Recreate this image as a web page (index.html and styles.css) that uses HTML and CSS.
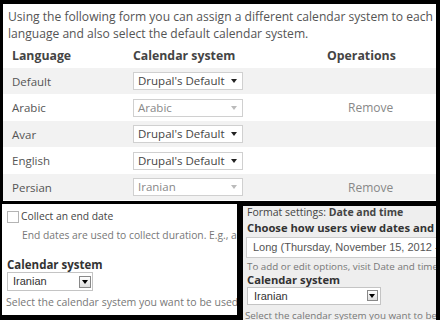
FILE: index.html
```html
<!DOCTYPE html>
<html lang="en">
<head>
    <meta charset="UTF-8">
    <title>Calendar systems</title>
    <link rel="stylesheet" href="styles.css">
</head>
<body>
<div class="shot top-shot">
    <p class="intro">Using the following form you can assign a different calendar system to each language and also select the default calendar system.</p>
    <table class="lang-table">
        <thead>
            <tr><th class="col-lang">Language</th><th class="col-cal">Calendar system</th><th class="col-ops">Operations</th></tr>
        </thead>
        <tbody>
            <tr class="odd">
                <td>Default</td>
                <td><div class="sel">Drupal's Default<span class="arrow"></span></div></td>
                <td></td>
            </tr>
            <tr class="even">
                <td>Arabic</td>
                <td><div class="sel disabled">Arabic<span class="arrow"></span></div></td>
                <td class="op">Remove</td>
            </tr>
            <tr class="odd">
                <td>Avar</td>
                <td><div class="sel">Drupal's Default<span class="arrow"></span></div></td>
                <td></td>
            </tr>
            <tr class="even">
                <td>English</td>
                <td><div class="sel">Drupal's Default<span class="arrow"></span></div></td>
                <td></td>
            </tr>
            <tr class="odd">
                <td>Persian</td>
                <td><div class="sel disabled">Iranian<span class="arrow"></span></div></td>
                <td class="op">Remove</td>
            </tr>
        </tbody>
    </table>
</div>
<div class="bottom">
    <div class="shot field-shot">
        <label class="check"><span class="box"></span>Collect an end date</label>
        <div class="desc">End dates are used to collect duration. E.g., allow an event to start on a date and end on another.</div>
        <div class="label">Calendar system</div>
        <div class="oldsel">Iranian<span class="btn"><span class="tri"></span></span></div>
        <div class="hint">Select the calendar system you want to be used for this field.</div>
    </div>
    <div class="shot format-shot">
        <div class="fmt">Format settings: <b>Date and time</b></div>
        <div class="label">Choose how users view dates and times:</div>
        <div class="input">Long (Thursday, November 15, 2012 - 10:20)</div>
        <div class="small">To add or edit options, visit Date and time settings.</div>
        <div class="label">Calendar system</div>
        <div class="oldsel wide">Iranian<span class="btn"><span class="tri"></span></span></div>
        <div class="small last">Select the calendar system you want to be used for this field.</div>
    </div>
</div>
</body>
</html>
```

FILE: styles.css
```css
html, body{
    margin:0px;
    background:#000;
}
body{
    width:440px;
    height:320px;
    overflow:hidden;
    font-family:"Open Sans", "DejaVu Sans", sans-serif;
    color:#555;
}
.shot{
    background:#fff;
    overflow:hidden;
}
.top-shot{
    margin:4px 4px 0px 3px;
    height:197px;
}
.intro{
    margin:0px;
    padding:4px 0px 0px 5px;
    width:430px;
    font-size:12.1px;
    line-height:17px;
}
.lang-table{
    width:100%;
    border-collapse:collapse;
    font-size:11.5px;
}
.lang-table th,
.lang-table td{
    padding:0px;
    text-align:left;
    vertical-align:middle;
}
.lang-table thead tr{
    height:26px;
}
.lang-table tr.odd{
    height:26px;
}
.lang-table tr.even{
    height:27px;
}
.lang-table th{
    font-size:12.3px;
    font-weight:bold;
    color:#444;
}
.col-lang{
    width:121px;
}
.lang-table th:first-child,
.lang-table td:first-child{
    padding-left:9px;
}
.col-cal{
    width:194px;
}
.lang-table tr.odd td{
    background:#f2f2f2;
}
.op{
    padding-left:21px !important;
    font-size:12px;
    color:#888;
}
.sel{
    position:relative;
    box-sizing:border-box;
    width:110px;
    height:18px;
    border:1px solid #d0d0d0;
    background:#fff;
    color:#444;
    font-size:11.5px;
    line-height:16px;
    padding-left:4px;
}
.sel .arrow{
    position:absolute;
    right:5px;
    top:6px;
    border-left:3px solid transparent;
    border-right:3px solid transparent;
    border-top:4px solid #222;
}
.sel.disabled{
    color:#888;
}
.sel.disabled .arrow{
    border-top-color:#bbb;
}
.bottom{
    display:flex;
    margin-top:3px;
}
.field-shot{
    margin-left:2px;
    width:235px;
    height:111px;
    padding-left:5px;
    box-sizing:border-box;
}
.check{
    display:flex;
    align-items:center;
    margin-top:5px;
    font-size:10.3px;
    line-height:15px;
    color:#444;
    white-space:nowrap;
}
.box{
    width:10px;
    height:10px;
    border:1px solid #b4b4b4;
    background:#fff;
    margin-right:2px;
}
.desc{
    margin-top:4px;
    padding-left:15px;
    font-size:10.3px;
    line-height:15px;
    color:#777;
    white-space:nowrap;
}
.label{
    font-size:11.5px;
    line-height:15px;
    font-weight:bold;
    color:#333;
    white-space:nowrap;
}
.field-shot .label{
    margin-top:14px;
}
.oldsel{
    position:relative;
    box-sizing:border-box;
    width:86px;
    height:19px;
    margin-top:0px;
    border:1px solid #c4c4c4;
    background:#fff;
    font-family:"Liberation Sans", Arial, sans-serif;
    font-size:11px;
    line-height:17px;
    color:#333;
    padding-left:5px;
}
.oldsel .btn{
    position:absolute;
    right:1px;
    top:3px;
    box-sizing:border-box;
    width:12px;
    height:12px;
    border:1px solid #888;
    background:linear-gradient(#fff, #ddd);
}
.oldsel .tri{
    position:absolute;
    left:2px;
    top:3px;
    border-left:3px solid transparent;
    border-right:3px solid transparent;
    border-top:4px solid #000;
}
.hint{
    margin-top:4px;
    margin-left:-1px;
    font-size:10.5px;
    line-height:14px;
    color:#777;
    white-space:nowrap;
}
.format-shot{
    flex:1;
    margin:2px 4px 0px 6px;
    height:114px;
    background:#eee;
    padding-left:4px;
}
.fmt{
    font-size:10.5px;
    line-height:13px;
    color:#444;
    white-space:nowrap;
}
.format-shot .label{
    font-size:11.2px;
    line-height:14px;
}
.format-shot .fmt + .label{
    margin-top:2px;
}
.input{
    box-sizing:border-box;
    height:21px;
    margin:2px -4px 0px -1px;
    border:1px solid #ccc;
    background:#fff;
    font-family:"Liberation Sans", Arial, sans-serif;
    font-size:11px;
    line-height:19px;
    color:#555;
    padding-left:6px;
    white-space:nowrap;
    overflow:hidden;
}
.small{
    font-size:9.8px;
    line-height:13px;
    color:#777;
    white-space:nowrap;
}
.format-shot .small{
    margin-top:2px;
}
.format-shot .small.last{
    margin-top:4px;
    margin-left:-2px;
}
.oldsel.wide{
    width:134px;
    height:18px;
    margin-top:0px;
    line-height:16px;
    padding-left:6px;
}
.oldsel.wide .btn{
    top:2px;
    right:2px;
    width:11px;
    height:11px;
}
.oldsel.wide .tri{
    left:1px;
}
```
